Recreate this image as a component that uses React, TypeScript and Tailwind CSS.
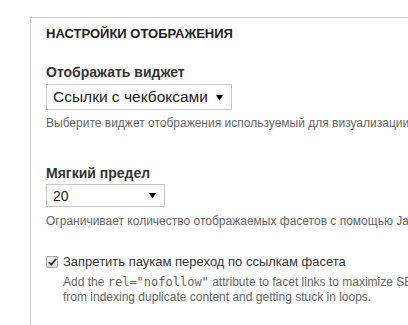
const Arrow = () => (
  <svg width="7" height="7" viewBox="0 0 7 7" className="shrink-0">
    <path d="M0 1h7L3.5 6.5z" fill="#000" />
  </svg>
);

const Check = () => (
  <span className="flex h-[12px] w-[12px] shrink-0 items-center justify-center rounded-[2px] border border-[#a9a9a9] bg-gradient-to-b from-[#f4f4f4] to-[#dcdcdc]">
    <svg width="9" height="8" viewBox="0 0 9 8">
      <path d="M1 4.2l2.2 2.4L8 1" fill="none" stroke="#333" strokeWidth="1.8" />
    </svg>
  </span>
);

export default function App() {
  return (
    <div className="h-[325px] w-[408px] overflow-hidden bg-white font-['Liberation_Sans',Arial,sans-serif] text-[#333]">
      <div className="ml-[30px] mt-[17px] h-[400px] w-[600px] border border-[#ccc] pl-[15px] pt-[8px]">
        <div className="text-[13px] font-bold uppercase leading-4 text-[#222]">Настройки отображения</div>

        <div className="mt-[21px] text-[14px] font-bold leading-[18px] text-[#333]">Отображать виджет</div>
        <div className="mt-[3px] flex h-[26px] w-[186px] items-center justify-between border border-[#c8c8c8] bg-white pl-[6px] pr-[8px]">
          <span className="text-[15.5px] leading-5 text-[#222]">Ссылки с чекбоксами</span>
          <Arrow />
        </div>
        <div className="mt-[5px] whitespace-nowrap text-[12px] leading-4 text-[#666]">
          Выберите виджет отображения используемый для визуализации фасетов.
        </div>

        <div className="mt-[33px] text-[14px] font-bold leading-[18px] text-[#333]">Мягкий предел</div>
        <div className="mt-[2px] flex h-[23px] w-[119px] items-center justify-between border border-[#c8c8c8] bg-white pl-[6px] pr-[8px]">
          <span className="text-[14px] leading-5 text-[#222]">20</span>
          <Arrow />
        </div>
        <div className="mt-[6px] whitespace-nowrap text-[12px] leading-4 text-[#666]">
          Ограничивает количество отображаемых фасетов с помощью JavaScript.
        </div>

        <div className="mt-[25px] flex items-center gap-[5px]">
          <Check />
          <span className="text-[13px] leading-4 text-[#333]">Запретить паукам переход по ссылкам фасета</span>
        </div>
        <div className="mt-[5px] whitespace-nowrap pl-[17px] text-[12px] leading-[15px] text-[#666]">
          Add the <code className="font-['DejaVu_Sans_Mono',monospace] text-[12px]">rel="nofollow"</code> attribute to facet links to maximize SEO by preventing crawlers
          <br />
          from indexing duplicate content and getting stuck in loops.
        </div>
      </div>
    </div>
  );
}
